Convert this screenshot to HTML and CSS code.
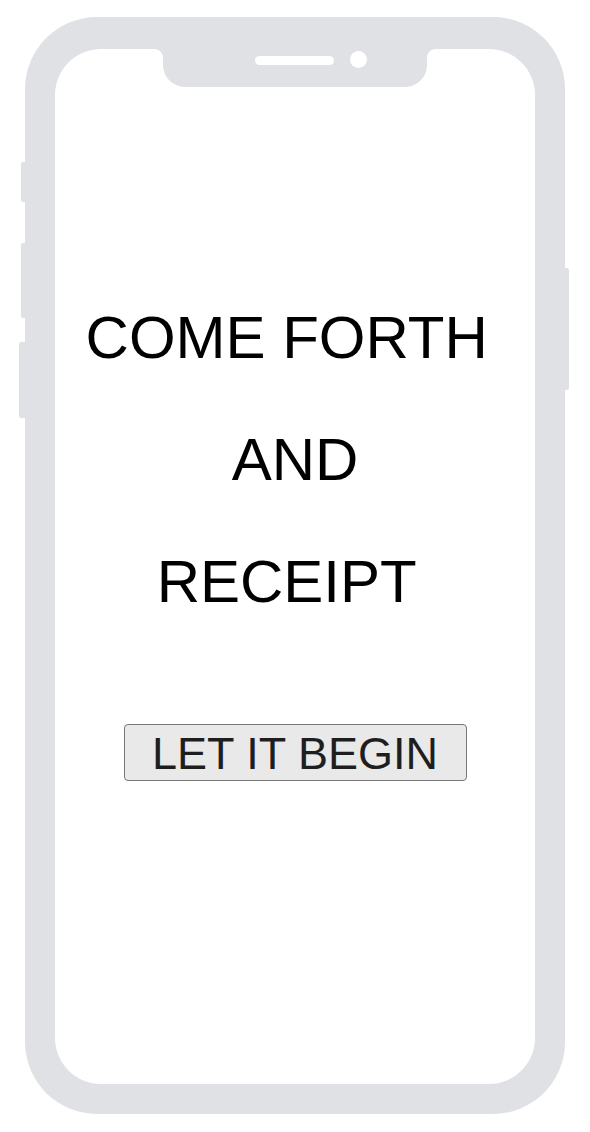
FILE: index.html
```html
<!DOCTYPE html>
<html>
<head>
<meta charset="utf-8">
<link rel="stylesheet" href="styles.css">
</head>
<body>
<div class="phone">
  <span class="side-btn btn-a"></span>
  <span class="side-btn btn-b"></span>
  <span class="side-btn btn-c"></span>
  <span class="side-btn btn-power"></span>
  <div class="screen">
    <div class="notch">
      <span class="speaker"></span>
      <span class="camera"></span>
    </div>
    <div class="title">
      <div class="line">COME FORTH&nbsp;</div>
      <div class="line">AND</div>
      <div class="line">RECEIPT&nbsp;</div>
    </div>
    <button class="begin">LET IT BEGIN</button>
  </div>
</div>
</body>
</html>
```
FILE: styles.css
```css
html, body {
  margin: 0;
  padding: 0;
  background: #ffffff;
}

body {
  font-family: "Liberation Sans", Arial, Helvetica, sans-serif;
}

.phone {
  position: relative;
  margin: 17px 0 0 25px;
  width: 540px;
  height: 1097px;
  box-sizing: border-box;
  padding: 32px 30px 30px 30px;
  background: #dfe1e5;
  border-radius: 72px;
}

.side-btn {
  position: absolute;
  background: #dfe1e5;
  width: 8px;
}

.btn-a {
  left: -4px;
  top: 145px;
  height: 40px;
  border-radius: 2px 0 0 2px;
}

.btn-b {
  left: -4px;
  top: 226px;
  height: 75px;
  border-radius: 2px 0 0 2px;
}

.btn-c {
  left: -6px;
  top: 325px;
  height: 76px;
  border-radius: 2px 0 0 2px;
}

.btn-power {
  right: -4px;
  top: 251px;
  height: 122px;
  border-radius: 0 2px 2px 0;
}

.screen {
  height: 100%;
  background: #ffffff;
  border-radius: 46px;
  display: flex;
  flex-direction: column;
  align-items: center;
}

.notch {
  position: relative;
  width: 264px;
  height: 38px;
  box-sizing: border-box;
  padding: 0 0 15px 92px;
  background: #dfe1e5;
  border-radius: 0 0 22px 22px;
  display: flex;
  align-items: center;
  gap: 16px;
}

.notch::before,
.notch::after {
  content: "";
  position: absolute;
  top: 0;
  width: 8px;
  height: 8px;
}

.notch::before {
  left: -8px;
  background: radial-gradient(circle at 0 100%, transparent 7.5px, #dfe1e5 8px);
}

.notch::after {
  right: -8px;
  background: radial-gradient(circle at 100% 100%, transparent 7.5px, #dfe1e5 8px);
}

.speaker {
  width: 79px;
  height: 9px;
  border-radius: 5px;
  background: #ffffff;
}

.camera {
  width: 17px;
  height: 17px;
  border-radius: 50%;
  background: #ffffff;
  margin-top: -2px;
}

.title {
  margin-top: 190px;
  text-align: center;
  font-size: 60px;
  line-height: 122px;
  color: #000000;
  white-space: nowrap;
}

.begin {
  margin-top: 81px;
  width: 343px;
  height: 57px;
  box-sizing: border-box;
  padding: 3px 0 0 0;
  font-family: "Liberation Sans", Arial, Helvetica, sans-serif;
  font-size: 45px;
  line-height: 52px;
  color: #1e1e1e;
  background: #e9e9e9;
  border: 1px solid #777777;
  border-radius: 4px;
  text-align: center;
}
```
